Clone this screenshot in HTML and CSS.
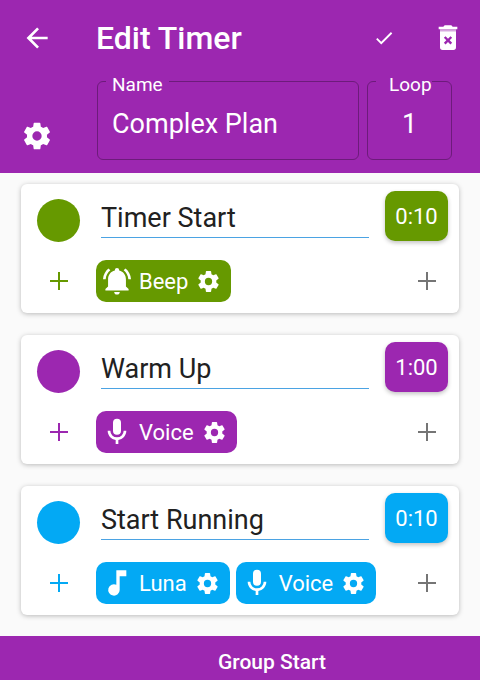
FILE: index.html
```html
<!DOCTYPE html>
<html lang="en">
<head>
<meta charset="utf-8">
<meta name="viewport" content="width=device-width, initial-scale=1">
<title>Edit Timer</title>
<link rel="stylesheet" href="styles.css">
</head>
<body>
<svg class="sprite" aria-hidden="true">
  <symbol id="cog" viewBox="0 0 24 24"><path d="M12 15.5A3.5 3.5 0 0 1 8.500 12 3.500 3.500 0 0 1 12 8.500a3.500 3.500 0 0 1 3.500 3.500 3.500 3.500 0 0 1-3.500 3.500m7.430-2.530c.04-.32.07-.64.07-.97s-.03-.66-.07-1l2.110-1.630c.19-.15.24-.42.12-.64l-2-3.460c-.12-.22-.39-.31-.61-.22l-2.490 1c-.52-.39-1.060-.73-1.690-.98l-.37-2.650A.506.506 0 0 0 14 2h-4c-.25 0-.46.18-.5.42l-.37 2.650c-.63.25-1.170.59-1.690.98l-2.490-1c-.22-.09-.49 0-.61.22l-2 3.460c-.13.22-.07.49.12.64L4.570 11c-.04.34-.07.67-.07 1s.03.65.07.97l-2.110 1.660c-.19.15-.25.42-.12.64l2 3.460c.12.22.39.3.61.22l2.490-1.010c.52.4 1.060.74 1.690.99l.37 2.650c.04.24.25.42.5.42h4c.25 0 .46-.18.5-.42l.37-2.650c.63-.26 1.170-.59 1.690-.99l2.490 1.010c.22.08.49 0 .61-.22l2-3.460c.12-.22.07-.49-.12-.64z"/></symbol>
  <symbol id="plus" viewBox="0 0 32 32"><path d="M15 7h2v8h8v2h-8v8h-2v-8H7v-2h8z"/></symbol>
  <symbol id="mic" viewBox="0 0 24 24"><path d="M12 2a3 3 0 0 1 3 3v6a3 3 0 0 1-6 0V5a3 3 0 0 1 3-3m7 9c0 3.530-2.610 6.440-6 6.930V21h-2v-3.070c-3.390-.49-6-3.400-6-6.930h2a5 5 0 0 0 10 0z"/></symbol>
  <symbol id="note" viewBox="0 0 24 24"><path d="M11.500 2.500v10.800A4.300 4.300 0 1 0 14 17.200V7h5V2.500z"/></symbol>
  <symbol id="bell" viewBox="0 0 24 24"><path d="M7 4 5.600 2.600C3.300 4.500 1.700 7.300 1.500 10.700h2C3.700 8 5 5.600 7 4m13.500 6.700h2c-.2-3.400-1.800-6.200-4.100-8.100L17 4c2 1.600 3.300 4 3.500 6.700M18.700 11c0-3.500-1.900-6.100-5.100-6.800v-.4a1.600 1.600 0 0 0-3.200 0v.4C7.200 4.900 5.300 7.500 5.300 11v5.200L3.300 18v1.200h17.400V18l-2-1.800zM12 22.200c1.200 0 2.100-.9 2.100-2H9.900c0 1.100.9 2 2.100 2"/></symbol>
</svg>

<header class="header">
  <div class="topbar">
    <button class="icon-button" type="button" aria-label="Back"><svg viewBox="0 0 24 24"><path d="M20 11v2H8l5.500 5.500-1.420 1.420L4.160 12l7.920-7.920L13.500 5.500 8 11z"/></svg></button>
    <h1 class="title">Edit Timer</h1>
    <div class="actions">
      <button class="icon-button small" type="button" aria-label="Save"><svg viewBox="0 0 24 24"><path d="M9 16.170 4.830 12l-1.420 1.410L9 19 21 7l-1.410-1.410z"/></svg></button>
      <button class="icon-button" type="button" aria-label="Delete"><svg viewBox="0 0 24 24"><path d="M15.500 3.500 14.500 2.500h-5l-1 1H5v2h14v-2z"/><path class="shade" d="M6 5.500h12V7H6z"/><path fill-rule="evenodd" d="M6 7h12v12a2 2 0 0 1-2 2H8a2 2 0 0 1-2-2zm2.900 4.900 1.850 1.850L8.900 15.600l1.250 1.250L12 15l1.850 1.850 1.250-1.250-1.850-1.850 1.850-1.850-1.250-1.250L12 12.500l-1.850-1.850z"/></svg></button>
    </div>
  </div>
  <div class="settings">
    <button class="icon-button" type="button" aria-label="Settings"><svg><use href="#cog"/></svg></button>
    <div class="field name-field">
      <label for="plan-name">Name</label>
      <input id="plan-name" type="text" value="Complex Plan">
    </div>
    <div class="field loop-field">
      <label for="loop">Loop</label>
      <input id="loop" type="text" inputmode="numeric" value="1">
    </div>
  </div>
</header>

<main class="timers">
  <section class="card green">
    <div class="row heading">
      <button class="swatch" type="button" aria-label="Color"></button>
      <input class="timer-name" type="text" aria-label="Timer name" value="Timer Start">
      <button class="time" type="button">0:10</button>
    </div>
    <div class="row">
      <button class="add" type="button" aria-label="Add start alert"><svg><use href="#plus"/></svg></button>
      <div class="chips">
        <button class="chip" type="button"><svg><use href="#bell"/></svg><span>Beep</span><svg class="cog"><use href="#cog"/></svg></button>
      </div>
      <button class="add end" type="button" aria-label="Add end alert"><svg><use href="#plus"/></svg></button>
    </div>
  </section>

  <section class="card purple">
    <div class="row heading">
      <button class="swatch" type="button" aria-label="Color"></button>
      <input class="timer-name" type="text" aria-label="Timer name" value="Warm Up">
      <button class="time" type="button">1:00</button>
    </div>
    <div class="row">
      <button class="add" type="button" aria-label="Add start alert"><svg><use href="#plus"/></svg></button>
      <div class="chips">
        <button class="chip" type="button"><svg><use href="#mic"/></svg><span>Voice</span><svg class="cog"><use href="#cog"/></svg></button>
      </div>
      <button class="add end" type="button" aria-label="Add end alert"><svg><use href="#plus"/></svg></button>
    </div>
  </section>

  <section class="card blue">
    <div class="row heading">
      <button class="swatch" type="button" aria-label="Color"></button>
      <input class="timer-name" type="text" aria-label="Timer name" value="Start Running">
      <button class="time" type="button">0:10</button>
    </div>
    <div class="row">
      <button class="add" type="button" aria-label="Add start alert"><svg><use href="#plus"/></svg></button>
      <div class="chips">
        <button class="chip" type="button"><svg><use href="#note"/></svg><span>Luna</span><svg class="cog"><use href="#cog"/></svg></button>
        <button class="chip" type="button"><svg><use href="#mic"/></svg><span>Voice</span><svg class="cog"><use href="#cog"/></svg></button>
      </div>
      <button class="add end" type="button" aria-label="Add end alert"><svg><use href="#plus"/></svg></button>
    </div>
  </section>
</main>

<footer class="group">Group Start</footer>
</body>
</html>
```
FILE: styles.css
```css
* {
  box-sizing: border-box;
}

body {
  margin: 0;
  min-height: 100vh;
  display: flex;
  flex-direction: column;
  background: #fafafa;
  color: #212121;
  font-family: Roboto, sans-serif;
}

button,
input {
  margin: 0;
  padding: 0;
  border: 0;
  background: none;
  color: inherit;
  font: inherit;
}

svg {
  display: block;
  width: 32px;
  height: 32px;
  fill: currentColor;
}

.sprite {
  position: absolute;
  width: 0;
  height: 0;
}

.header {
  padding: 0 16px 13px 21px;
  background: #9c27b0;
  color: #fff;
}

.topbar {
  display: flex;
  align-items: center;
  gap: 43px;
  height: 76px;
}

.title {
  flex: 1;
  margin: 0;
  font-size: 32px;
  font-weight: 500;
  line-height: 40px;
}

.actions {
  display: flex;
  gap: 32px;
}

.icon-button {
  display: grid;
  place-items: center;
  width: 32px;
  height: 32px;
}

.icon-button.small svg {
  width: 22px;
  height: 22px;
}

.shade {
  opacity: 0.6;
}

.settings {
  display: flex;
  align-items: flex-end;
  padding: 5px 12px 0 0;
}

.settings .icon-button {
  margin: 0 44px 8px 0;
}

.field {
  position: relative;
  height: 79px;
  border: 1px solid #6d1b7b;
  border-radius: 6px;
}

.name-field {
  flex: 1;
  min-width: 0;
  margin-right: 8px;
}

.loop-field {
  width: 85px;
}

.field label {
  position: absolute;
  top: -8px;
  left: 8px;
  padding: 0 6px;
  background: #9c27b0;
  font-size: 19px;
  line-height: 22px;
}

.loop-field label {
  padding: 0 0 0 13px;
}

.field input {
  width: 100%;
  height: 100%;
  padding: 6px 14px 0;
  font-size: 27px;
}

.loop-field input {
  text-align: center;
}

.timers {
  flex: 1;
  display: flex;
  flex-direction: column;
  gap: 22px;
  padding: 11px 21px 21px;
}

.card {
  display: flex;
  flex-direction: column;
  gap: 18px;
  padding: 7px 11px 11px 16px;
  border-radius: 6px;
  background: #fff;
  box-shadow: 0 1px 5px rgba(0, 0, 0, 0.26);
}

.green {
  --tone: #669900;
}

.purple {
  --tone: #9c27b0;
}

.blue {
  --tone: #03a9f4;
}

.row {
  display: flex;
  align-items: center;
}

.heading {
  align-items: flex-end;
}

.swatch {
  width: 43px;
  height: 43px;
  margin-right: 21px;
  border-radius: 50%;
  background: var(--tone);
}

.timer-name {
  flex: 1;
  min-width: 0;
  height: 40px;
  margin: 0 16px 4px 0;
  border-bottom: 1px solid #4ba3e3;
  font-size: 27px;
}

.time {
  align-self: flex-start;
  width: 63px;
  height: 50px;
  margin-bottom: 1px;
  border-radius: 10px;
  background: var(--tone);
  box-shadow: 0 2px 4px rgba(0, 0, 0, 0.24);
  color: #fff;
  font-size: 22px;
}

.add {
  display: grid;
  place-items: center;
  width: 43px;
  height: 42px;
  color: var(--tone);
}

.add.end {
  color: #757575;
}

.chips {
  flex: 1;
  display: flex;
  gap: 6px;
  margin-left: 16px;
}

.chip {
  display: flex;
  align-items: center;
  gap: 6px;
  height: 42px;
  padding: 0 10px 0 5px;
  border-radius: 10px;
  background: var(--tone);
  color: #fff;
  font-size: 22px;
}

.chip .cog {
  width: 25px;
  height: 25px;
  margin-left: 2px;
}

.group {
  height: 44px;
  padding: 13px 0 0 64px;
  background: #9c27b0;
  color: #fff;
  font-size: 21px;
  font-weight: 500;
  line-height: 26px;
  text-align: center;
}
```
